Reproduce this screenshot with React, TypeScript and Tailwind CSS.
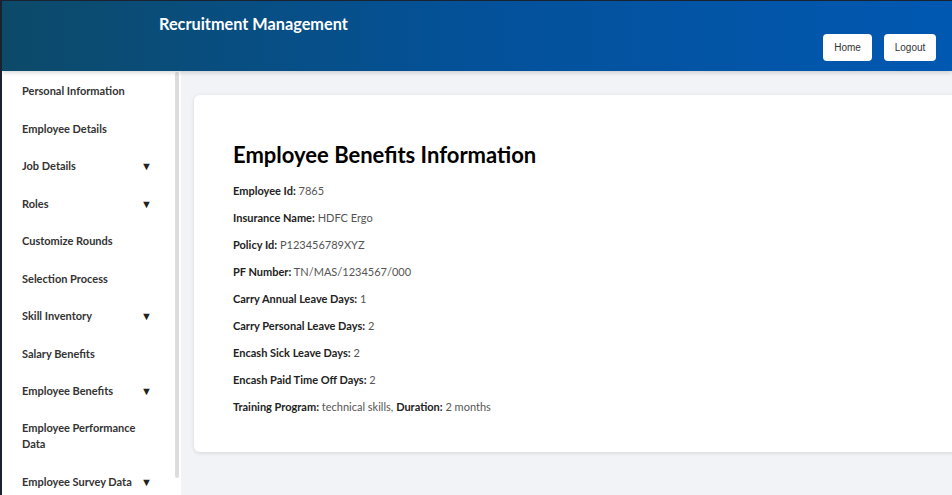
import React from "react";

const items: { label: string; caret?: boolean; two?: boolean }[] = [
  { label: "Personal Information" },
  { label: "Employee Details" },
  { label: "Job Details", caret: true },
  { label: "Roles", caret: true },
  { label: "Customize Rounds" },
  { label: "Selection Process" },
  { label: "Skill Inventory", caret: true },
  { label: "Salary Benefits" },
  { label: "Employee Benefits", caret: true },
  { label: "Employee Performance Data", two: true },
  { label: "Employee Survey Data", caret: true },
];

const rows: [string, string][] = [
  ["Employee Id:", "7865"],
  ["Insurance Name:", "HDFC Ergo"],
  ["Policy Id:", "P123456789XYZ"],
  ["PF Number:", "TN/MAS/1234567/000"],
  ["Carry Annual Leave Days:", "1"],
  ["Carry Personal Leave Days:", "2"],
  ["Encash Sick Leave Days:", "2"],
  ["Encash Paid Time Off Days:", "2"],
];

export default function App() {
  return (
    <div
      className="w-[952px] h-[495px] overflow-hidden flex flex-col bg-[#f1f3f6] border-l-2 border-t border-[#1a2230]"
      style={{ fontFamily: 'Lato, "Open Sans", sans-serif' }}
    >
      <header className="h-[70px] shrink-0 flex items-start justify-between bg-gradient-to-r from-[#0d4a69] via-[#04519a] to-[#0158b1] shadow-[0_2px_4px_rgba(0,0,0,0.15)] relative z-10">
        <h1 className="ml-[157px] mt-[13px] text-white font-bold text-[16.3px] leading-[20px]">
          Recruitment Management
        </h1>
        <div className="flex gap-[12px] mt-[33px] mr-[16px]">
          <button className="w-[49px] h-[27px] bg-white rounded-[4px] text-[10px] text-[#333]" style={{ fontFamily: '"Liberation Sans", Arial, sans-serif' }}>
            Home
          </button>
          <button className="w-[52px] h-[27px] bg-white rounded-[4px] text-[10px] text-[#333]" style={{ fontFamily: '"Liberation Sans", Arial, sans-serif' }}>
            Logout
          </button>
        </div>
      </header>
      <div className="flex flex-1 min-h-0">
        <aside className="w-[179px] shrink-0 bg-white flex">
          <nav className="flex-1 flex flex-col pt-[1px]">
            {items.map((it) =>
              it.two ? (
                <div
                  key={it.label}
                  className="flex items-center pl-[20px] pr-[23px] pt-[10px] pb-[11px] text-[11px] font-bold text-[#333] leading-[16px]"
                >
                  <span className="max-w-[125px]">{it.label}</span>
                </div>
              ) : (
                <div
                  key={it.label}
                  className="flex items-center justify-between pl-[20px] pr-[23px] min-h-[37.5px] py-[11px] text-[11px] font-bold text-[#333] leading-[15.5px]"
                >
                  <span className="max-w-[125px]">{it.label}</span>
                  {it.caret && <span className="text-[11px] text-[#222]">▼</span>}
                </div>
              )
            )}
          </nav>
          <div className="w-[4px] mr-[2px] mt-[1px] h-[406px] bg-[#dcdcdc] rounded-sm" />
        </aside>
        <main className="flex-1 pl-[13px] pt-[24px]">
          <div className="bg-white rounded-[6px] shadow-[0_1px_4px_rgba(0,0,0,0.12)] h-[357px] pl-[39px] pt-[45px] mr-[-10px]">
            <h2 className="text-[22px] font-bold text-black leading-[30px] mb-[13px]">
              Employee Benefits Information
            </h2>
            <div className="flex flex-col gap-[11.6px] text-[11px] leading-[15.4px]">
              {rows.map(([k, v]) => (
                <p key={k} className="text-[#555]">
                  <b className="text-[#222]">{k}</b> {v}
                </p>
              ))}
              <p className="text-[#555]">
                <b className="text-[#222]">Training Program:</b> technical skills,{" "}
                <b className="text-[#222]">Duration:</b> 2 months
              </p>
            </div>
          </div>
        </main>
      </div>
    </div>
  );
}
